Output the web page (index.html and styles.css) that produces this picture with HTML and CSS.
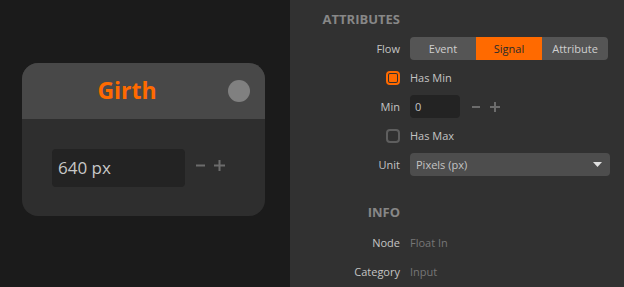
FILE: index.html
```html
<!DOCTYPE html>
<html>
<head>
<meta charset="utf-8">
<link rel="stylesheet" href="styles.css">
</head>
<body>
<div class="canvas">
  <div class="node">
    <div class="node-head">
      <div class="node-title">Girth</div>
      <div class="node-dot"></div>
    </div>
    <div class="node-body">
      <div class="node-input">640 px</div>
      <div class="stepper big">
        <svg width="9" height="11" viewBox="0 0 9 11"><rect x="0" y="4.5" width="9" height="2" fill="#6c6c6c"/></svg>
        <svg width="11" height="11" viewBox="0 0 11 11"><rect x="0" y="4.5" width="11" height="2" fill="#6c6c6c"/><rect x="4.5" y="0" width="2" height="11" fill="#6c6c6c"/></svg>
      </div>
    </div>
  </div>
</div>
<div class="panel">
  <div class="heading head-attr">ATTRIBUTES</div>
  <div class="rows">
    <div class="label">Flow</div>
    <div class="seg">
      <div class="seg-item">Event</div>
      <div class="seg-item active">Signal</div>
      <div class="seg-item">Attribute</div>
    </div>

    <div class="label"><span class="check on"></span></div>
    <div class="value">Has Min</div>

    <div class="label">Min</div>
    <div class="value">
      <div class="small-input">0</div>
      <div class="stepper small">
        <svg width="8" height="10" viewBox="0 0 8 10"><rect x="0" y="4" width="8" height="2" fill="#6c6c6c"/></svg>
        <svg width="10" height="10" viewBox="0 0 10 10"><rect x="0" y="4" width="10" height="2" fill="#6c6c6c"/><rect x="4" y="0" width="2" height="10" fill="#6c6c6c"/></svg>
      </div>
    </div>

    <div class="label"><span class="check"></span></div>
    <div class="value">Has Max</div>

    <div class="label">Unit</div>
    <div class="select">
      <span>Pixels (px)</span>
      <svg width="9" height="5" viewBox="0 0 9 5"><path d="M0 0 H9 L4.5 5 Z" fill="#e0e0e0"/></svg>
    </div>
  </div>
  <div class="heading head-info">INFO</div>
  <div class="rows">
    <div class="label">Node</div>
    <div class="value muted">Float In</div>
    <div class="label">Category</div>
    <div class="value muted">Input</div>
  </div>
</div>
</body>
</html>
```
FILE: styles.css
```css
html, body {
  margin: 0;
  padding: 0;
}
body {
  display: flex;
  width: 624px;
  height: 287px;
  overflow: hidden;
  font-family: "Open Sans", "Noto Sans", sans-serif;
  background: #313131;
}
.canvas {
  width: 290px;
  flex: none;
  background: #1b1b1b;
  padding: 63px 0 0 22px;
  box-sizing: border-box;
}
.node {
  width: 243px;
  height: 153px;
  border-radius: 16px;
  overflow: hidden;
  background: #2e2e2e;
  display: flex;
  flex-direction: column;
}
.node-head {
  height: 56px;
  background: #484848;
  display: flex;
  align-items: center;
  padding: 0 15px 0 4px;
}
.node-title {
  flex: 1;
  text-align: center;
  color: #ff6a00;
  font-weight: 700;
  font-size: 23px;
  line-height: 26px;
  margin-top: -3px;
}
.node-dot {
  width: 22px;
  height: 22px;
  border-radius: 50%;
  background: #808080;
}
.node-body {
  flex: 1;
  display: flex;
  align-items: center;
  padding-left: 30px;
  gap: 11px;
}
.node-input {
  width: 133px;
  height: 38px;
  box-sizing: border-box;
  background: #232323;
  border-radius: 4px;
  color: #c8c8c8;
  font-size: 17px;
  line-height: 38px;
  padding-left: 6px;
}
.stepper {
  display: flex;
  align-items: center;
}
.stepper.big {
  gap: 9px;
  margin-top: -4px;
}
.stepper.small {
  gap: 10px;
  margin-left: 12px;
}
.panel {
  flex: 1;
  padding-right: 14px;
}
.heading {
  width: 110px;
  text-align: right;
  color: #878787;
  font-weight: 700;
  font-size: 13px;
  line-height: 18px;
}
.head-attr {
  margin-top: 10px;
  margin-bottom: 9px;
}
.head-info {
  margin-top: 27px;
  margin-bottom: 10px;
}
.rows {
  display: grid;
  grid-template-columns: 110px 1fr;
  grid-auto-rows: 23px;
  column-gap: 10px;
  row-gap: 6px;
}
.label {
  display: flex;
  align-items: center;
  justify-content: flex-end;
  color: #c4c4c4;
  font-size: 11px;
}
.value {
  display: flex;
  align-items: center;
  color: #c4c4c4;
  font-size: 11px;
}
.value.muted {
  color: #767676;
}
.seg {
  display: flex;
  border-radius: 4px;
  overflow: hidden;
  background: #555555;
  margin-right: 2px;
}
.seg-item {
  flex: 1;
  display: flex;
  align-items: center;
  justify-content: center;
  color: #cfcfcf;
  font-size: 11px;
}
.seg-item.active {
  background: #ff6a00;
  color: #2a2a2a;
}
.check {
  width: 14px;
  height: 14px;
  box-sizing: border-box;
  border: 2px solid #5e5e5e;
  border-radius: 4px;
}
.check.on {
  border-color: #ff6a00;
  padding: 1px;
  background: #ff6a00;
  background-clip: content-box;
}
.small-input {
  width: 50px;
  height: 23px;
  box-sizing: border-box;
  background: #232323;
  border-radius: 4px;
  padding-left: 5px;
  line-height: 23px;
  color: #c4c4c4;
  font-size: 11px;
}
.select {
  display: flex;
  align-items: center;
  justify-content: space-between;
  background: #4d4d4d;
  border-radius: 4px;
  padding: 0 8px 0 6px;
  color: #c4c4c4;
  font-size: 11px;
}
```
